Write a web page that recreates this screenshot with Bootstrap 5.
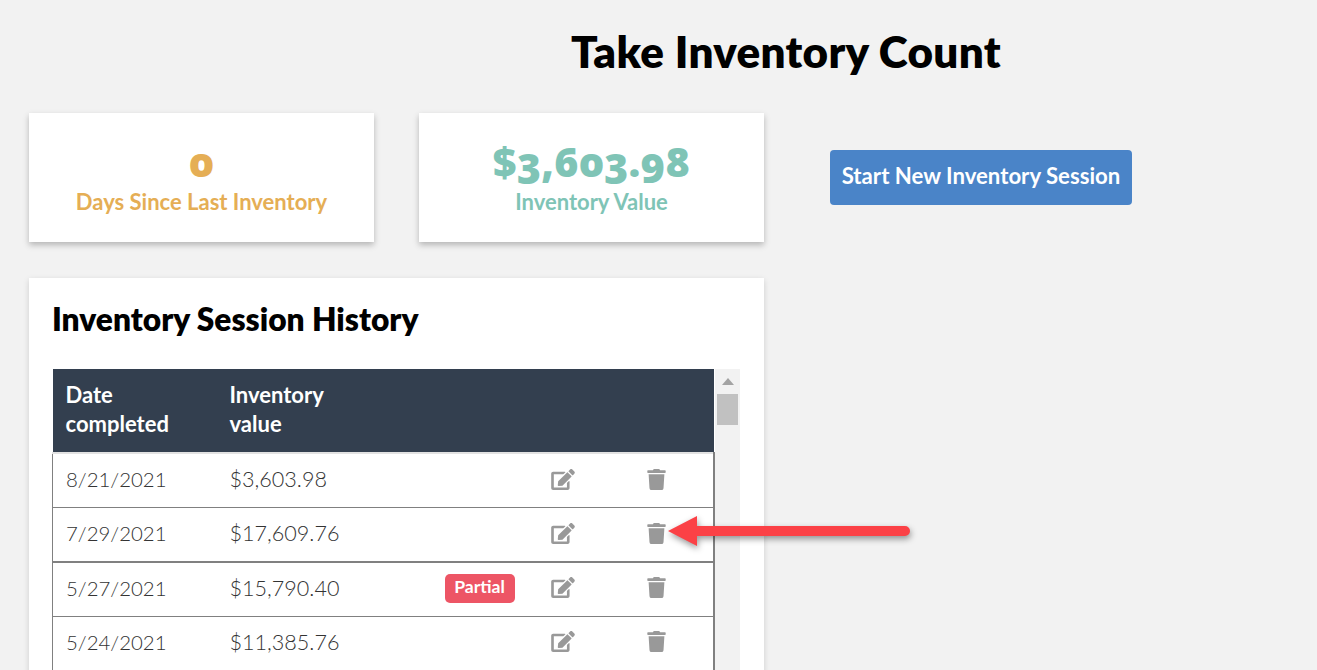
<!DOCTYPE html>
<html lang="en"><head><meta charset="utf-8"><title>Take Inventory Count</title>
<link href="https://cdn.jsdelivr.net/npm/bootstrap@5.3.0/dist/css/bootstrap.min.css" rel="stylesheet">
<style>
html,body{height:670px;overflow:hidden}
body{background:#f2f2f2;font-family:"Lato","Noto Sans",sans-serif;position:relative;color:#000}
.page-title{font-family:"Lato",sans-serif;font-weight:800;font-size:44px;letter-spacing:.3px;line-height:50px;margin:26px 0 37px;padding-left:411px;text-align:center}
.page-wrap{padding-left:29px;width:1132px}
.left-col{width:735px}
.stat-row{gap:45px;margin-bottom:36px}
.stat-box{width:345px;height:129px;background:#fff;box-shadow:0 3px 6px rgba(0,0,0,.25);text-align:center;padding-top:25px}
.stat-num{font-family:"Open Sans","Lato",sans-serif;font-weight:800;font-variant-numeric:oldstyle-nums;font-size:41px;line-height:46px;margin-bottom:3px}
.stat-label{font-weight:700;font-size:22px;line-height:28px;padding-top:1px}
.amber{color:#e5ae55}.teal{color:#7fc4b6}
.start-btn{margin:37px 0 0 66px;width:302px;height:55px;background:#4a84c8;border:0;color:#fff;font-weight:700;font-size:22.2px;border-radius:4px;padding:0 0 3px}
.history{background:#fff;box-shadow:0 2px 6px rgba(0,0,0,.15);padding:23px 24px 0 23px;height:500px}
.history h2{font-family:"Lato",sans-serif;font-weight:800;font-size:31.7px;line-height:36px;margin:0 0 32px}
.table-shell{display:flex}
.inv-table{width:663px;flex:none;table-layout:fixed;margin:0;border-collapse:collapse}
.inv-table thead th{background:#333f4f;color:#fff;font-weight:700;font-size:22px;line-height:29px;padding:11px 13px 14px;border:0;vertical-align:top}
.inv-table tbody{border-top:2px solid #e2e2e2}
.inv-table tbody td{font-weight:300;font-size:21.6px;line-height:28px;color:#333;padding:11px 13px 14px;border:0;border-bottom:1px solid #808080;height:54px;vertical-align:middle;background:#fff}
.inv-table tbody td:first-child{border-left:1px solid #808080;font-size:20.4px}
.inv-table tbody td:last-child{border-right:2px solid #808080}
.inv-table tbody tr:nth-child(2) td{border-bottom-width:2px;padding-bottom:13px}
.inv-table .c1{width:164px}.inv-table .c2{width:215px}.inv-table .c3{width:106px}.inv-table .c4{width:96px}
.partial-tag{display:block;background:#ed5565;color:#fff;font-weight:700;font-size:17.6px;line-height:24px;padding:1px 0 4px;margin:0 0 -2px;border-radius:5px;width:70px;text-align:center}
.ico{fill:#999;display:block}
.fake-bar{width:25px;background:#f2f2f2;position:relative;padding:0 2px}
.bar-up{width:0;height:0;border:6px solid transparent;border-top:0;border-bottom:7px solid #a3a3a3;margin:9px auto 9px}
.bar-thumb{height:31px;background:#c1c1c1}
.mark-arrow{position:absolute;left:660px;top:505px;filter:drop-shadow(1px 3px 3px rgba(0,0,0,.4))}
</style></head><body>
<div class="page-wrap">
<h1 class="page-title">Take Inventory Count</h1>
<div class="d-flex align-items-start">
<div class="left-col">
<div class="d-flex stat-row">
<div class="stat-box"><div class="stat-num amber">0</div><div class="stat-label amber">Days Since Last Inventory</div></div>
<div class="stat-box"><div class="stat-num teal">$3,603.98</div><div class="stat-label teal">Inventory Value</div></div>
</div>
<div class="history">
<h2>Inventory Session History</h2>
<div class="table-shell">
<table class="table inv-table">
<colgroup><col class="c1"><col class="c2"><col class="c3"><col class="c4"><col></colgroup>
<thead><tr><th>Date completed</th><th>Inventory<br>value</th><th></th><th></th><th></th></tr></thead>
<tbody>
<tr><td>8/21/2021</td><td>$3,603.98</td><td></td><td><svg class="ico" width="24" height="21" viewBox="0 0 576 512"><path d="M402.6 83.2l90.2 90.2c3.8 3.8 3.8 10 0 13.8L274.4 405.6l-92.8 10.3c-12.4 1.4-22.9-9.1-21.5-21.5l10.3-92.8L388.8 83.2c3.8-3.8 10-3.8 13.8 0zm162-22.9l-48.8-48.8c-15.2-15.2-39.9-15.2-55.2 0l-35.4 35.4c-3.8 3.8-3.8 10 0 13.8l90.2 90.2c3.8 3.8 10 3.8 13.8 0l35.4-35.4c15.2-15.3 15.2-40 0-55.2zM384 346.2V448H64V128h229.8c3.2 0 6.2-1.3 8.5-3.5l40-40c7.6-7.6 2.2-20.5-8.5-20.5H48C21.5 64 0 85.5 0 112v352c0 26.5 21.5 48 48 48h352c26.5 0 48-21.5 48-48V306.2c0-10.7-12.9-16-20.5-8.5l-40 40c-2.2 2.3-3.5 5.3-3.5 8.5z"/></svg></td><td><svg class="ico" width="19" height="21" viewBox="0 0 448 512"><path d="M432 32H312l-9.4-18.7A24 24 0 0 0 281.1 0H166.8a23.72 23.72 0 0 0-21.4 13.3L136 32H16A16 16 0 0 0 0 48v32a16 16 0 0 0 16 16h416a16 16 0 0 0 16-16V48a16 16 0 0 0-16-16zM53.2 467a48 48 0 0 0 47.9 45h245.8a48 48 0 0 0 47.9-45L416 128H32z"/></svg></td></tr>
<tr><td>7/29/2021</td><td>$17,609.76</td><td></td><td><svg class="ico" width="24" height="21" viewBox="0 0 576 512"><path d="M402.6 83.2l90.2 90.2c3.8 3.8 3.8 10 0 13.8L274.4 405.6l-92.8 10.3c-12.4 1.4-22.9-9.1-21.5-21.5l10.3-92.8L388.8 83.2c3.8-3.8 10-3.8 13.8 0zm162-22.9l-48.8-48.8c-15.2-15.2-39.9-15.2-55.2 0l-35.4 35.4c-3.8 3.8-3.8 10 0 13.8l90.2 90.2c3.8 3.8 10 3.8 13.8 0l35.4-35.4c15.2-15.3 15.2-40 0-55.2zM384 346.2V448H64V128h229.8c3.2 0 6.2-1.3 8.5-3.5l40-40c7.6-7.6 2.2-20.5-8.5-20.5H48C21.5 64 0 85.5 0 112v352c0 26.5 21.5 48 48 48h352c26.5 0 48-21.5 48-48V306.2c0-10.7-12.9-16-20.5-8.5l-40 40c-2.2 2.3-3.5 5.3-3.5 8.5z"/></svg></td><td><svg class="ico" width="19" height="21" viewBox="0 0 448 512"><path d="M432 32H312l-9.4-18.7A24 24 0 0 0 281.1 0H166.8a23.72 23.72 0 0 0-21.4 13.3L136 32H16A16 16 0 0 0 0 48v32a16 16 0 0 0 16 16h416a16 16 0 0 0 16-16V48a16 16 0 0 0-16-16zM53.2 467a48 48 0 0 0 47.9 45h245.8a48 48 0 0 0 47.9-45L416 128H32z"/></svg></td></tr>
<tr><td>5/27/2021</td><td>$15,790.40</td><td><span class="partial-tag">Partial</span></td><td><svg class="ico" width="24" height="21" viewBox="0 0 576 512"><path d="M402.6 83.2l90.2 90.2c3.8 3.8 3.8 10 0 13.8L274.4 405.6l-92.8 10.3c-12.4 1.4-22.9-9.1-21.5-21.5l10.3-92.8L388.8 83.2c3.8-3.8 10-3.8 13.8 0zm162-22.9l-48.8-48.8c-15.2-15.2-39.9-15.2-55.2 0l-35.4 35.4c-3.8 3.8-3.8 10 0 13.8l90.2 90.2c3.8 3.8 10 3.8 13.8 0l35.4-35.4c15.2-15.3 15.2-40 0-55.2zM384 346.2V448H64V128h229.8c3.2 0 6.2-1.3 8.5-3.5l40-40c7.6-7.6 2.2-20.5-8.5-20.5H48C21.5 64 0 85.5 0 112v352c0 26.5 21.5 48 48 48h352c26.5 0 48-21.5 48-48V306.2c0-10.7-12.9-16-20.5-8.5l-40 40c-2.2 2.3-3.5 5.3-3.5 8.5z"/></svg></td><td><svg class="ico" width="19" height="21" viewBox="0 0 448 512"><path d="M432 32H312l-9.4-18.7A24 24 0 0 0 281.1 0H166.8a23.72 23.72 0 0 0-21.4 13.3L136 32H16A16 16 0 0 0 0 48v32a16 16 0 0 0 16 16h416a16 16 0 0 0 16-16V48a16 16 0 0 0-16-16zM53.2 467a48 48 0 0 0 47.9 45h245.8a48 48 0 0 0 47.9-45L416 128H32z"/></svg></td></tr>
<tr><td>5/24/2021</td><td>$11,385.76</td><td></td><td><svg class="ico" width="24" height="21" viewBox="0 0 576 512"><path d="M402.6 83.2l90.2 90.2c3.8 3.8 3.8 10 0 13.8L274.4 405.6l-92.8 10.3c-12.4 1.4-22.9-9.1-21.5-21.5l10.3-92.8L388.8 83.2c3.8-3.8 10-3.8 13.8 0zm162-22.9l-48.8-48.8c-15.2-15.2-39.9-15.2-55.2 0l-35.4 35.4c-3.8 3.8-3.8 10 0 13.8l90.2 90.2c3.8 3.8 10 3.8 13.8 0l35.4-35.4c15.2-15.3 15.2-40 0-55.2zM384 346.2V448H64V128h229.8c3.2 0 6.2-1.3 8.5-3.5l40-40c7.6-7.6 2.2-20.5-8.5-20.5H48C21.5 64 0 85.5 0 112v352c0 26.5 21.5 48 48 48h352c26.5 0 48-21.5 48-48V306.2c0-10.7-12.9-16-20.5-8.5l-40 40c-2.2 2.3-3.5 5.3-3.5 8.5z"/></svg></td><td><svg class="ico" width="19" height="21" viewBox="0 0 448 512"><path d="M432 32H312l-9.4-18.7A24 24 0 0 0 281.1 0H166.8a23.72 23.72 0 0 0-21.4 13.3L136 32H16A16 16 0 0 0 0 48v32a16 16 0 0 0 16 16h416a16 16 0 0 0 16-16V48a16 16 0 0 0-16-16zM53.2 467a48 48 0 0 0 47.9 45h245.8a48 48 0 0 0 47.9-45L416 128H32z"/></svg></td></tr>
</tbody></table>
<div class="fake-bar"><div class="bar-up"></div><div class="bar-thumb"></div></div>
</div>
</div>
</div>
<button class="btn start-btn">Start New Inventory Session</button>
</div>
</div>
<svg class="mark-arrow" width="260" height="56" viewBox="0 0 260 56"><path d="M8 26 37 11V21H245a5 5 0 0 1 0 10H37V41Z" fill="#fb4146"/></svg>
<script src="https://cdn.jsdelivr.net/npm/bootstrap@5.3.0/dist/js/bootstrap.bundle.min.js"></script>
</body></html>
